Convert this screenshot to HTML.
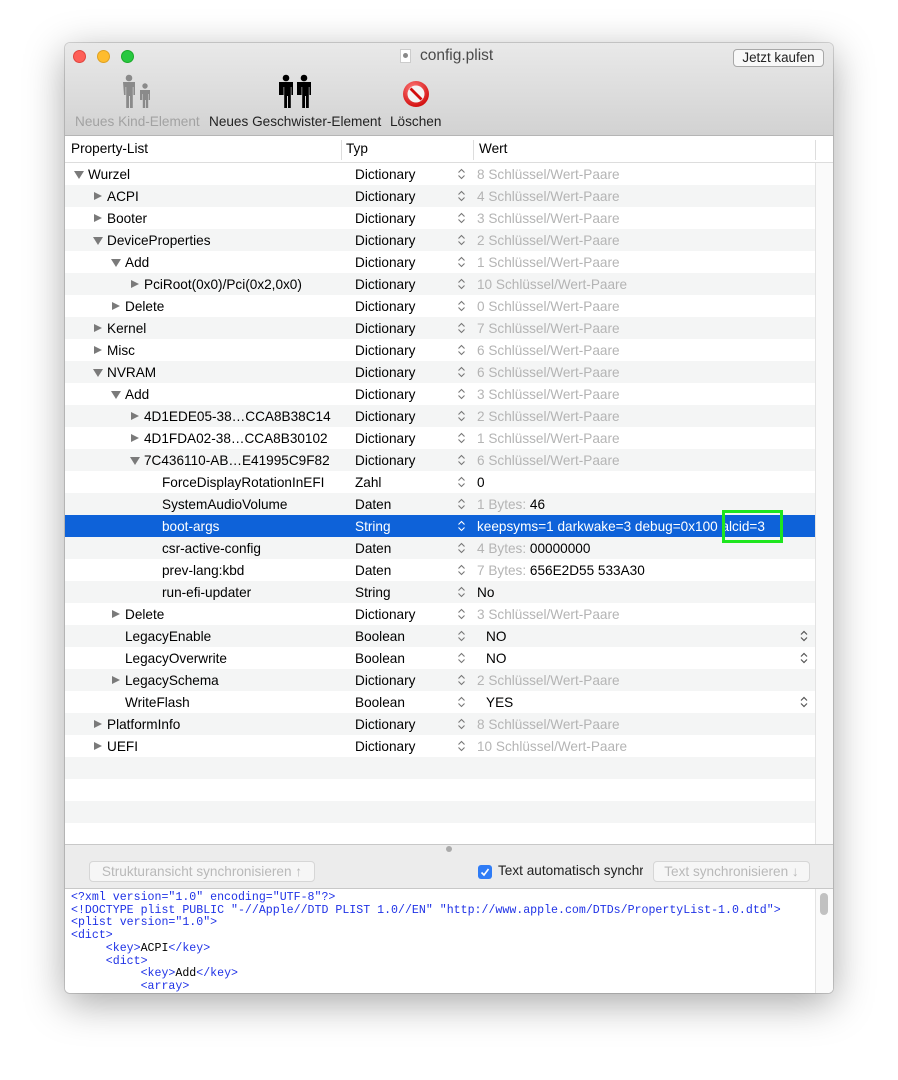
<!DOCTYPE html>
<html><head><meta charset="utf-8"><style>
*{margin:0;padding:0;box-sizing:border-box}
body{width:898px;height:1080px;background:#fff;position:relative;overflow:hidden;font-family:"Liberation Sans",sans-serif;font-size:13.6px;color:#000}
.win{position:absolute;left:65px;top:43px;width:768px;height:950px;border-radius:5px;box-shadow:0 10px 40px rgba(0,0,0,.35),0 0 0 1px rgba(0,0,0,.15);overflow:hidden;background:#fff}
.tb{position:absolute;left:0;top:0;width:768px;height:93px;background:linear-gradient(#e9e9e9,#d2d2d2);border-bottom:1px solid #b5b5b5}
.a{position:absolute;white-space:nowrap}
.row{position:absolute;left:0;width:750px;height:22px;line-height:24px}
.g{background:#f4f5f5}
.sel{background:#0e62d9;color:#fff}
.gr{color:#b4b4b4}
.tri{position:absolute;width:0;height:0}
.c{border-left:8px solid #7a7a7a;border-top:4.5px solid transparent;border-bottom:4.5px solid transparent;top:7px;left:1px}
.o{border-top:8px solid #7a7a7a;border-left:5px solid transparent;border-right:5px solid transparent;top:8px}
.mono{font-family:"Liberation Mono",monospace;font-size:11.6px;color:#1f32e6;line-height:12.7px;position:absolute;left:6px;top:3px;white-space:pre}
.mono b{font-weight:normal;color:#000}
.btn{position:absolute;border:1px solid #d6d6d6;border-radius:4px;background:#f6f6f6;color:#b9b9b9;font-size:13.6px;text-align:center;line-height:19px;height:21px}
</style></head><body>
<div class="win">
<div class="tb">
  <div class="a" style="left:8px;top:7px;width:13px;height:13px;border-radius:50%;background:#fe5f57;border:1px solid #e0443e"></div>
  <div class="a" style="left:32px;top:7px;width:13px;height:13px;border-radius:50%;background:#febc2e;border:1px solid #dea123"></div>
  <div class="a" style="left:56px;top:7px;width:13px;height:13px;border-radius:50%;background:#28c840;border:1px solid #1aab29"></div>
  <div class="a" style="left:335px;top:6px;width:11px;height:14px;background:#fff;border:1px solid #ccc"><div style="width:5px;height:5px;border-radius:50%;background:#888;margin:3px auto"></div></div>
  <div class="a" style="left:355px;top:4px;font-size:15.5px;color:#4a4a4a">config.plist</div>
  <div class="a" style="left:668px;top:6px;width:91px;height:18px;border:1px solid #a8a8a8;border-radius:4px;background:#f8f8f8;font-size:13.4px;line-height:16px;text-align:center;color:#222">Jetzt kaufen</div>
  <svg class="a" style="left:55px;top:31px" width="35" height="35" viewBox="0 0 35 35">
    <g fill="#8a8a8a"><circle cx="9" cy="4" r="3.3"/><path d="M3 8h12v13h-1.6v-8h-.6v21h-2.8V22h-1V34H6.2V13h-.6v8H4z"/>
    <circle cx="25" cy="12" r="2.7"/><path d="M20 16h10v10h-1.3v-6h-.5v14h-2.3v-8h-.8v8h-2.3V20h-.5v6H20z"/></g></svg>
  <div class="a" style="left:10px;top:71px;color:#a2a2a2">Neues Kind-Element</div>
  <svg class="a" style="left:212px;top:31px" width="36" height="35" viewBox="0 0 36 35">
    <g fill="#000"><circle cx="9" cy="4" r="3.3"/><path d="M2 8h14v13h-1.6v-8h-.6v21h-2.8V22h-1V34H7.2V13h-.6v8H2z"/>
    <circle cx="27" cy="4" r="3.3"/><path d="M20 8h14v13h-1.6v-8h-.6v21h-2.8V22h-1V34h-2.8V13h-.6v8H20z"/></g></svg>
  <div class="a" style="left:144px;top:71px;color:#222">Neues Geschwister-Element</div>
  <svg class="a" style="left:337px;top:37px" width="28" height="28" viewBox="0 0 28 28">
    <defs><radialGradient id="r" cx=".4" cy=".3" r=".8"><stop offset="0" stop-color="#ff7a7a"/><stop offset="1" stop-color="#c00"/></radialGradient></defs>
    <circle cx="14" cy="14" r="13" fill="url(#r)"/><circle cx="14" cy="14" r="8.5" fill="#f4f4f4"/>
    <path d="M7.5 9.5l11 11 2-2-11-11z" fill="#d10c0c"/></svg>
  <div class="a" style="left:325px;top:71px;color:#222">Löschen</div>
</div>
<div class="a" style="left:0;top:93px;width:768px;height:27px;background:#fff;border-bottom:1px solid #ddd"></div>
<div class="a" style="left:6px;top:98px">Property-List</div>
<div class="a" style="left:276px;top:97px;width:1px;height:20px;background:#ddd"></div>
<div class="a" style="left:281px;top:98px">Typ</div>
<div class="a" style="left:408px;top:97px;width:1px;height:20px;background:#ddd"></div>
<div class="a" style="left:414px;top:98px">Wert</div>
<div class="a" style="left:750px;top:97px;width:1px;height:20px;background:#ddd"></div>
<div class="a" style="left:750px;top:120px;width:18px;height:682px;background:#fafafa;border-left:1px solid #e3e3e3"></div>
<div id="rows" style="position:absolute;left:0;top:120px">
<div class="row" style="top:0"><span class="tri o" style="left:9px"></span><span class="a" style="left:23px">Wurzel</span><span class="a" style="left:290px">Dictionary</span><span class="a gr" style="left:412px">8 Schlüssel/Wert-Paare</span></div>
<div class="row g" style="top:22px"><span class="tri c" style="left:29px"></span><span class="a" style="left:42px">ACPI</span><span class="a" style="left:290px">Dictionary</span><span class="a gr" style="left:412px">4 Schlüssel/Wert-Paare</span></div>
<div class="row" style="top:44px"><span class="tri c" style="left:29px"></span><span class="a" style="left:42px">Booter</span><span class="a" style="left:290px">Dictionary</span><span class="a gr" style="left:412px">3 Schlüssel/Wert-Paare</span></div>
<div class="row g" style="top:66px"><span class="tri o" style="left:28px"></span><span class="a" style="left:42px">DeviceProperties</span><span class="a" style="left:290px">Dictionary</span><span class="a gr" style="left:412px">2 Schlüssel/Wert-Paare</span></div>
<div class="row" style="top:88px"><span class="tri o" style="left:46px"></span><span class="a" style="left:60px">Add</span><span class="a" style="left:290px">Dictionary</span><span class="a gr" style="left:412px">1 Schlüssel/Wert-Paare</span></div>
<div class="row g" style="top:110px"><span class="tri c" style="left:66px"></span><span class="a" style="left:79px">PciRoot(0x0)/Pci(0x2,0x0)</span><span class="a" style="left:290px">Dictionary</span><span class="a gr" style="left:412px">10 Schlüssel/Wert-Paare</span></div>
<div class="row" style="top:132px"><span class="tri c" style="left:47px"></span><span class="a" style="left:60px">Delete</span><span class="a" style="left:290px">Dictionary</span><span class="a gr" style="left:412px">0 Schlüssel/Wert-Paare</span></div>
<div class="row g" style="top:154px"><span class="tri c" style="left:29px"></span><span class="a" style="left:42px">Kernel</span><span class="a" style="left:290px">Dictionary</span><span class="a gr" style="left:412px">7 Schlüssel/Wert-Paare</span></div>
<div class="row" style="top:176px"><span class="tri c" style="left:29px"></span><span class="a" style="left:42px">Misc</span><span class="a" style="left:290px">Dictionary</span><span class="a gr" style="left:412px">6 Schlüssel/Wert-Paare</span></div>
<div class="row g" style="top:198px"><span class="tri o" style="left:28px"></span><span class="a" style="left:42px">NVRAM</span><span class="a" style="left:290px">Dictionary</span><span class="a gr" style="left:412px">6 Schlüssel/Wert-Paare</span></div>
<div class="row" style="top:220px"><span class="tri o" style="left:46px"></span><span class="a" style="left:60px">Add</span><span class="a" style="left:290px">Dictionary</span><span class="a gr" style="left:412px">3 Schlüssel/Wert-Paare</span></div>
<div class="row g" style="top:242px"><span class="tri c" style="left:66px"></span><span class="a" style="left:79px">4D1EDE05-38…CCA8B38C14</span><span class="a" style="left:290px">Dictionary</span><span class="a gr" style="left:412px">2 Schlüssel/Wert-Paare</span></div>
<div class="row" style="top:264px"><span class="tri c" style="left:66px"></span><span class="a" style="left:79px">4D1FDA02-38…CCA8B30102</span><span class="a" style="left:290px">Dictionary</span><span class="a gr" style="left:412px">1 Schlüssel/Wert-Paare</span></div>
<div class="row g" style="top:286px"><span class="tri o" style="left:65px"></span><span class="a" style="left:79px">7C436110-AB…E41995C9F82</span><span class="a" style="left:290px">Dictionary</span><span class="a gr" style="left:412px">6 Schlüssel/Wert-Paare</span></div>
<div class="row" style="top:308px"><span class="a" style="left:97px">ForceDisplayRotationInEFI</span><span class="a" style="left:290px">Zahl</span><span class="a" style="left:412px">0</span></div>
<div class="row g" style="top:330px"><span class="a" style="left:97px">SystemAudioVolume</span><span class="a" style="left:290px">Daten</span><span class="a" style="left:412px"><span class="gr">1 Bytes:</span> 46</span></div>
<div class="row sel" style="top:352px"><span class="a" style="left:97px">boot-args</span><span class="a" style="left:290px">String</span><span class="a" style="left:412px">keepsyms=1 darkwake=3 debug=0x100 alcid=3</span></div>
<div class="row g" style="top:374px"><span class="a" style="left:97px">csr-active-config</span><span class="a" style="left:290px">Daten</span><span class="a" style="left:412px"><span class="gr">4 Bytes:</span> 00000000</span></div>
<div class="row" style="top:396px"><span class="a" style="left:97px">prev-lang:kbd</span><span class="a" style="left:290px">Daten</span><span class="a" style="left:412px"><span class="gr">7 Bytes:</span> 656E2D55 533A30</span></div>
<div class="row g" style="top:418px"><span class="a" style="left:97px">run-efi-updater</span><span class="a" style="left:290px">String</span><span class="a" style="left:412px">No</span></div>
<div class="row" style="top:440px"><span class="tri c" style="left:47px"></span><span class="a" style="left:60px">Delete</span><span class="a" style="left:290px">Dictionary</span><span class="a gr" style="left:412px">3 Schlüssel/Wert-Paare</span></div>
<div class="row g" style="top:462px"><span class="a" style="left:60px">LegacyEnable</span><span class="a" style="left:290px">Boolean</span><span class="a" style="left:421px">NO</span><svg class="a" style="left:735px;top:5px" width="8" height="12" viewBox="0 0 8 12"><path d="M1 4.5L4 1.5 7 4.5M1 7.5L4 10.5 7 7.5" fill="none" stroke="#555" stroke-width="1.2"/></svg></div>
<div class="row" style="top:484px"><span class="a" style="left:60px">LegacyOverwrite</span><span class="a" style="left:290px">Boolean</span><span class="a" style="left:421px">NO</span><svg class="a" style="left:735px;top:5px" width="8" height="12" viewBox="0 0 8 12"><path d="M1 4.5L4 1.5 7 4.5M1 7.5L4 10.5 7 7.5" fill="none" stroke="#555" stroke-width="1.2"/></svg></div>
<div class="row g" style="top:506px"><span class="tri c" style="left:47px"></span><span class="a" style="left:60px">LegacySchema</span><span class="a" style="left:290px">Dictionary</span><span class="a gr" style="left:412px">2 Schlüssel/Wert-Paare</span></div>
<div class="row" style="top:528px"><span class="a" style="left:60px">WriteFlash</span><span class="a" style="left:290px">Boolean</span><span class="a" style="left:421px">YES</span><svg class="a" style="left:735px;top:5px" width="8" height="12" viewBox="0 0 8 12"><path d="M1 4.5L4 1.5 7 4.5M1 7.5L4 10.5 7 7.5" fill="none" stroke="#555" stroke-width="1.2"/></svg></div>
<div class="row g" style="top:550px"><span class="tri c" style="left:29px"></span><span class="a" style="left:42px">PlatformInfo</span><span class="a" style="left:290px">Dictionary</span><span class="a gr" style="left:412px">8 Schlüssel/Wert-Paare</span></div>
<div class="row" style="top:572px"><span class="tri c" style="left:29px"></span><span class="a" style="left:42px">UEFI</span><span class="a" style="left:290px">Dictionary</span><span class="a gr" style="left:412px">10 Schlüssel/Wert-Paare</span></div>
<div class="row g" style="top:594px"></div>
<div class="row" style="top:616px"></div>
<div class="row g" style="top:638px"></div>
<div class="row" style="top:660px;height:22px"></div>
</div>
<svg class="a" style="left:392px;top:125px" width="10" height="590" viewBox="0 0 10 590">
<defs><path id="s" d="M1.5 4.5L4.5 1.5 7.5 4.5M1.5 7.5L4.5 10.5 7.5 7.5" fill="none" stroke="#777" stroke-width="1.1"/></defs>
<use href="#s" y="0"/><use href="#s" y="22"/><use href="#s" y="44"/><use href="#s" y="66"/><use href="#s" y="88"/><use href="#s" y="110"/><use href="#s" y="132"/><use href="#s" y="154"/><use href="#s" y="176"/><use href="#s" y="198"/><use href="#s" y="220"/><use href="#s" y="242"/><use href="#s" y="264"/><use href="#s" y="286"/><use href="#s" y="308"/><use href="#s" y="330"/><use href="#s" y="374"/><use href="#s" y="396"/><use href="#s" y="418"/><use href="#s" y="440"/><use href="#s" y="462"/><use href="#s" y="484"/><use href="#s" y="506"/><use href="#s" y="528"/><use href="#s" y="550"/><use href="#s" y="572"/>
</svg>
<svg class="a" style="left:392px;top:477px" width="10" height="12" viewBox="0 0 10 12"><path d="M1.5 4.5L4.5 1.5 7.5 4.5M1.5 7.5L4.5 10.5 7.5 7.5" fill="none" stroke="#fff" stroke-width="1.1"/></svg>
<div class="a" style="left:657px;top:467px;width:61px;height:33px;border:3px solid #1ee61e"></div>
<div class="a" style="left:0;top:801px;width:768px;height:45px;background:#ececec;border-top:1px solid #c8c8c8;border-bottom:1px solid #c8c8c8"></div>
<div class="a" style="left:381px;top:803px;width:6px;height:6px;border-radius:50%;background:#aaa"></div>
<div class="btn" style="left:24px;top:818px;width:226px">Strukturansicht synchronisieren ↑</div>
<div class="a" style="left:413px;top:822px;width:14px;height:14px;border-radius:3px;background:#2f7cf6"><svg width="14" height="14" viewBox="0 0 14 14"><path d="M3.5 7.5l2.5 2.5 4.5-6" fill="none" stroke="#fff" stroke-width="1.6"/></svg></div>
<div class="a" style="left:433px;top:820px;color:#222;width:145px;overflow:hidden">Text automatisch synchronisieren</div>
<div class="btn" style="left:588px;top:818px;width:157px">Text synchronisieren ↓</div>
<div class="a" style="left:0;top:846px;width:768px;height:104px;background:#fff;overflow:hidden">
<div class="mono">&lt;?xml version="1.0" encoding="UTF-8"?&gt;
&lt;!DOCTYPE plist PUBLIC "-//Apple//DTD PLIST 1.0//EN" "http://www.apple.com/DTDs/PropertyList-1.0.dtd"&gt;
&lt;plist version="1.0"&gt;
&lt;dict&gt;
     &lt;key&gt;<b>ACPI</b>&lt;/key&gt;
     &lt;dict&gt;
          &lt;key&gt;<b>Add</b>&lt;/key&gt;
          &lt;array&gt;
               &lt;dict&gt;</div>
<div class="a" style="left:750px;top:0;width:18px;height:104px;background:#fafafa;border-left:1px solid #e3e3e3"><div style="margin:4px 0 0 4px;width:8px;height:22px;border-radius:4px;background:#c1c1c1"></div></div>
</div>
</div>
</body></html>
